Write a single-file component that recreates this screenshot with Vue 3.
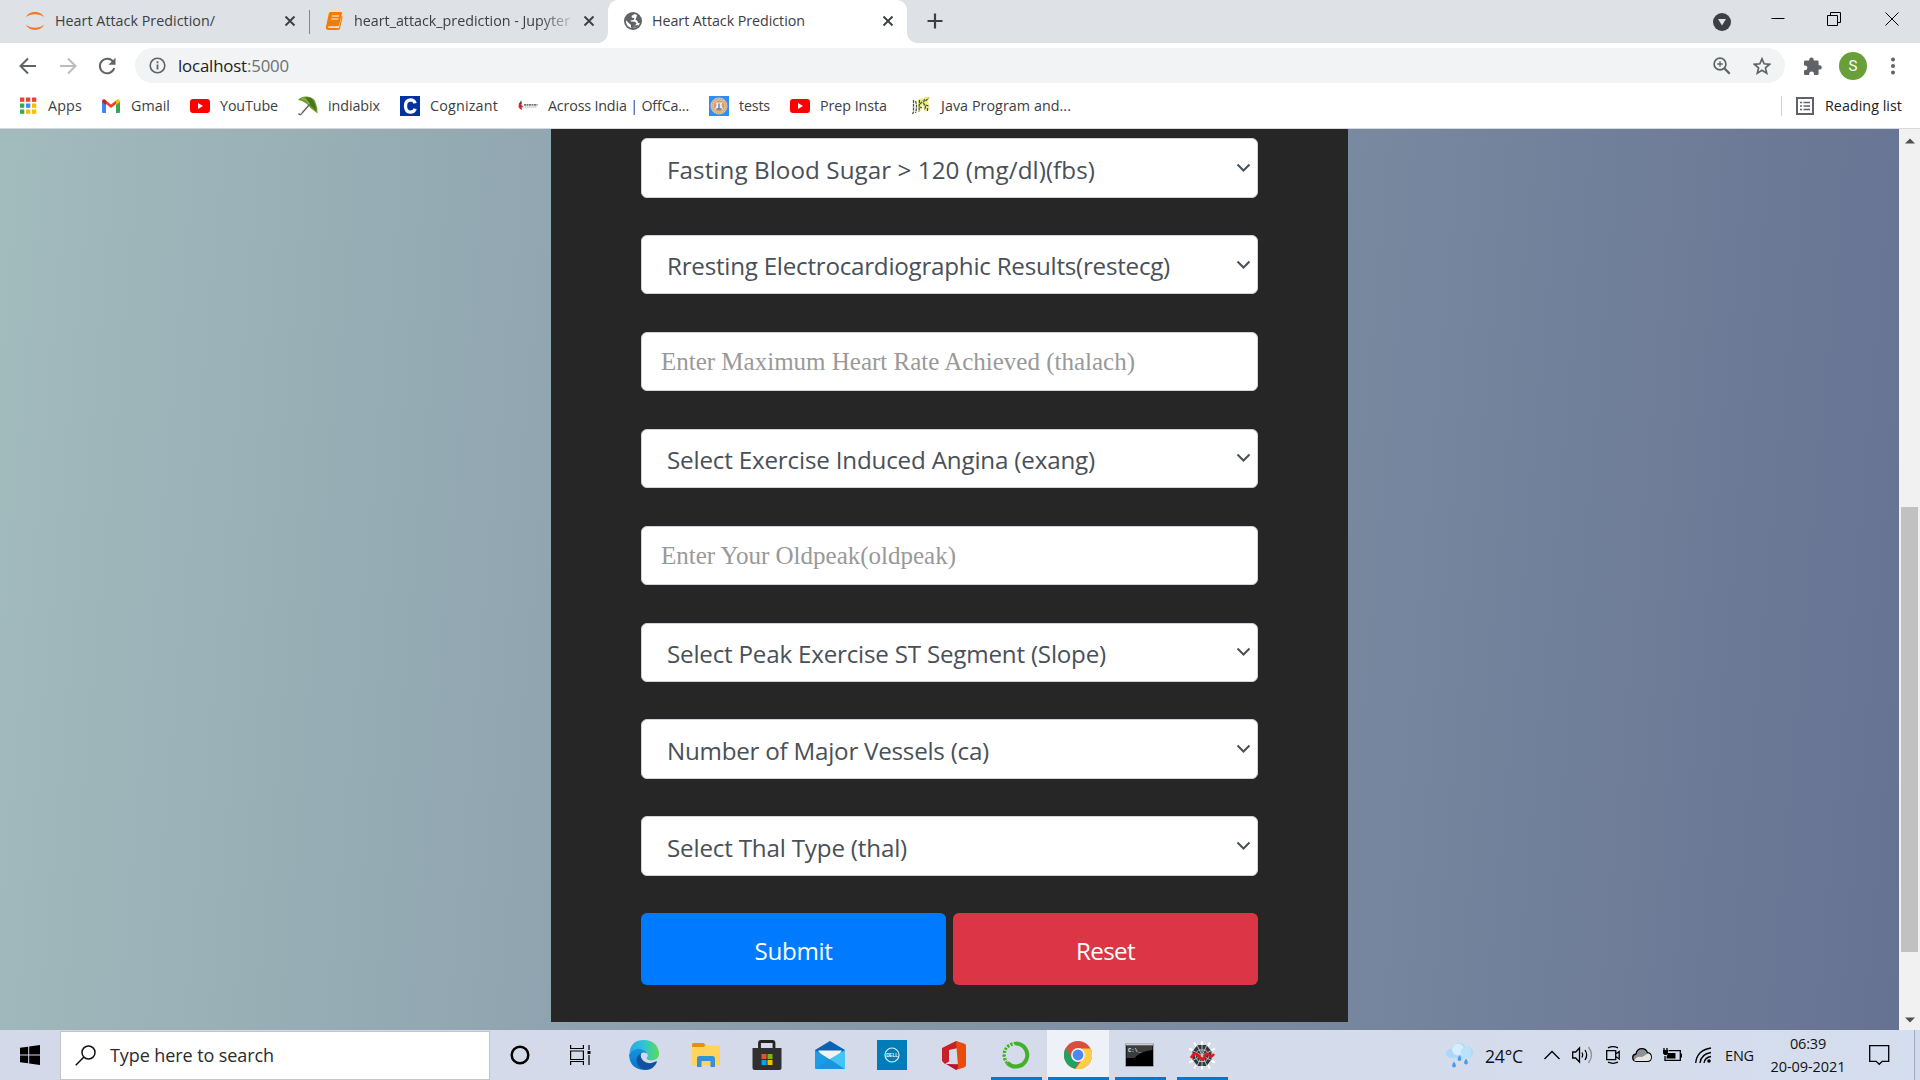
<script setup>
// Spreads letters so that a label takes exactly the given width.
const vFit = {
  mounted(el, { value }) {
    const natural = el.getBoundingClientRect().width
    el.style.letterSpacing = (value - natural) / el.textContent.length + 'px'
  }
}

const fields = [
  { label: 'Fasting Blood Sugar > 120 (mg/dl)(fbs)', width: 428, select: true },
  { label: 'Rresting Electrocardiographic Results(restecg)', width: 503, select: true },
  { label: 'Enter Maximum Heart Rate Achieved (thalach)', width: 474, select: false },
  { label: 'Select Exercise Induced Angina (exang)', width: 428, select: true },
  { label: 'Enter Your Oldpeak(oldpeak)', width: 295, select: false },
  { label: 'Select Peak Exercise ST Segment (Slope)', width: 439, select: true },
  { label: 'Number of Major Vessels (ca)', width: 322, select: true },
  { label: 'Select Thal Type (thal)', width: 240, select: true }
]

const bookmarks = [
  { icon: 'apps', label: 'Apps', width: 34 },
  { icon: 'gmail', label: 'Gmail', width: 39 },
  { icon: 'youtube', label: 'YouTube', width: 58 },
  { icon: 'umbrella', label: 'indiabix', width: 52 },
  { icon: 'cognizant', label: 'Cognizant', width: 68 },
  { icon: 'offcampus', label: 'Across India | OffCa...', width: 141 },
  { icon: 'tests', label: 'tests', width: 31 },
  { icon: 'youtube', label: 'Prep Insta', width: 67 },
  { icon: 'java', label: 'Java Program and...', width: 130 }
]

const appColors = ['#ea4335', '#ea4335', '#ea4335', '#34a853', '#4285f4', '#fbbc04', '#34a853', '#fbbc04', '#fbbc04']
</script>

<template>
  <div class="screen">
    <header class="tabs">
      <div class="tab first">
        <svg class="fav" width="20" height="20" viewBox="0 0 20 20"><path d="M1 6.200C3.800 -.6 16.200 -.6 19 6.200 14.500 2.400 5.500 2.400 1 6.200zM1 13.800C3.800 20.600 16.200 20.600 19 13.800 14.500 17.600 5.500 17.600 1 13.800z" fill="#f37726" /></svg>
        <span v-fit="160" class="title">Heart Attack Prediction/</span>
        <svg class="x" width="12" height="12" viewBox="0 0 12 12"><path d="M1.500 1.500l9 9M10.500 1.500l-9 9" /></svg>
      </div>
      <div class="tab second">
        <svg class="fav" width="18" height="20" viewBox="0 0 18 20"><path d="M5.500 1h10.500q1.300 0 1 1.300L14.200 14q-.4 1.300-1.700 1.300H3.500q-1.200 1 .3 1.600H14l2.700-12 1 .5L15 17.500Q14.500 19 13 19H3Q.2 18.500 1 15.500L3.800 2.500Q4.200 1 5.500 1z" fill="#f57c00" /><path d="M7 5h7M6.300 8h7" stroke="#fbd5ac" stroke-width="1.300" /></svg>
        <span class="clip"><span v-fit="216" class="title">heart_attack_prediction - Jupyter</span></span>
        <svg class="x" width="12" height="12" viewBox="0 0 12 12"><path d="M1.500 1.500l9 9M10.500 1.500l-9 9" /></svg>
      </div>
      <div class="tab active">
        <svg class="fav" width="18" height="18" viewBox="0 0 18 18"><circle cx="9" cy="9" r="9" fill="#5f6368" /><path d="M10.500 2L7.500 4 8 5.800 10.500 6 9.500 8 6.500 8.500 7 9.500 11 9.800 12.500 11.500 10.500 14 9.500 16 7 15.800 7 13 5 11.300 2 8.200V10.500Q3 14.500 7 16 12.500 16.500 15 13L15.800 11 14 11 13.500 9 11.500 7.500 12.500 5 13 3z" fill="#fff" /><path d="M9.700 15.800L11 13.500 14.800 12.800Q13 15.800 9.700 15.800z" fill="#5f6368" /></svg>
        <span v-fit="153" class="title">Heart Attack Prediction</span>
        <svg class="x" width="12" height="12" viewBox="0 0 12 12"><path d="M1.500 1.500l9 9M10.500 1.500l-9 9" /></svg>
      </div>
      <svg class="plus" width="16" height="16" viewBox="0 0 16 16"><path d="M8 .5v15M.5 8h15" stroke="#3c4043" stroke-width="2.200" /></svg>
      <div class="window">
        <svg width="18" height="18" viewBox="0 0 18 18"><circle cx="9" cy="9" r="9" fill="#3c4043" /><path d="M5 6h8l-4 6.500z" fill="#dee1e6" /></svg>
        <svg class="ctl" width="14" height="14" viewBox="0 0 14 14"><path d="M.5 6.500h13" /></svg>
        <svg class="ctl" width="14" height="14" viewBox="0 0 14 14"><path d="M.5 3.500h10v10h-10zM3.500 3.500v-3h10v10h-3" /></svg>
        <svg class="ctl" width="14" height="14" viewBox="0 0 14 14"><path d="M.5.5l13 13M13.500.5l-13 13" /></svg>
      </div>
    </header>

    <div class="toolbar">
      <svg width="18" height="18" viewBox="0 0 18 18" class="nav"><path d="M17 9H2M9 1.500L1.500 9 9 16.500" /></svg>
      <svg width="18" height="18" viewBox="0 0 18 18" class="nav dim"><path d="M1 9h15M9 1.500L16.500 9 9 16.500" /></svg>
      <svg width="18" height="18" viewBox="0 0 18 18" class="nav"><path d="M15.300 5A7.300 7.300 0 1 0 16.200 11" /><path d="M17.500.8v7h-7z" fill="#5f6368" stroke="none" /></svg>
      <div class="omnibox">
        <svg width="17" height="17" viewBox="0 0 17 17"><circle cx="8.500" cy="8.500" r="7.300" fill="none" stroke="#5f6368" stroke-width="1.600" /><path d="M8.500 7.500v5M8.500 4.300v1.900" stroke="#5f6368" stroke-width="1.800" /></svg>
        <span v-fit="111" class="url">localhost<i>:5000</i></span>
        <svg class="zoomer" width="18" height="18" viewBox="0 0 18 18"><g fill="none" stroke="#5f6368" stroke-width="1.700"><circle cx="7" cy="7" r="5.900" /><path d="M11.300 11.300l5.400 5.400" stroke-width="2.300" /><path d="M7 4.200v5.600M4.200 7h5.600" stroke-width="1.300" /></g></svg>
        <svg width="18" height="18" viewBox="0 0 18 18"><path d="M9 1.800l2.150 5 5.400.5-4.100 3.550 1.250 5.300L9 13.300l-4.700 2.850 1.250-5.300L1.450 7.300l5.400-.5z" fill="none" stroke="#5f6368" stroke-width="1.700" /></svg>
      </div>
      <svg class="puzzle" width="18" height="18" viewBox="0 0 18 18"><path d="M0 4.800Q0 3.500 1.300 3.500H5.300V2.600a2.200 2.200 0 0 1 4.400 0v.9h3.600q1.300 0 1.300 1.300V8.200h1a2.200 2.200 0 0 1 0 4.400h-1v4.100Q14.600 18 13.300 18H10v-1a2.400 2.400 0 0 0-4.800 0v1H1.300Q0 18 0 16.700v-3.500h1a2.400 2.400 0 0 0 0-4.800H0z" fill="#5f6368" /></svg>
      <span class="avatar">S</span>
      <svg class="dots" width="4" height="18" viewBox="0 0 4 18" fill="#5f6368"><circle cx="2" cy="2.500" r="2" /><circle cx="2" cy="9" r="2" /><circle cx="2" cy="15.500" r="2" /></svg>
    </div>

    <nav class="bookmarks">
      <div v-for="b in bookmarks" :key="b.label" class="bm">
        <svg width="20" height="20" viewBox="0 0 20 20">
          <template v-if="b.icon === 'apps'"><rect v-for="(c, i) in appColors" :key="i" :x="(i % 3) * 6" :y="1.500 + Math.floor(i / 3) * 6" width="4.300" height="4.300" :fill="c" /></template>
          <template v-else-if="b.icon === 'gmail'"><path d="M0 5v11q0 1 1 1h3V8z" fill="#4285f4" /><path d="M18 5v11q0 1-1 1h-3V8z" fill="#34a853" /><path d="M4 8V4.500l5 4 5-4V8l-5 4z" fill="#ea4335" /><path d="M0 5.500Q.3 2.500 3 3.500l1 1V9L0 6z" fill="#c5221f" /><path d="M18 5.500Q17.700 2.500 15 3.500l-1 1V9l4-3z" fill="#fbbc04" /></template>
          <template v-else-if="b.icon === 'youtube'"><rect y="3" width="20" height="14" rx="3" fill="#f00" /><path d="M8 7v6l5-3z" fill="#fff" /></template>
          <template v-else-if="b.icon === 'umbrella'"><path d="M0 4Q3 0 9 0.500 17 1 18 8q2 4 1.500 9.500L13 12.500 9 8 4 5z" fill="#6f9d2c" /><path d="M7 1l6 1q4 3 5.500 13L13 10z" fill="#47761c" /><path d="M4 2.500Q9 3 11 8" fill="none" stroke="#a3c45b" /><path d="M11.500 8.500L4.500 16.500q-2 3.500-4 1" fill="none" stroke="#666" stroke-width="1.500" /></template>
          <template v-else-if="b.icon === 'cognizant'"><rect width="20" height="20" fill="#0033a1" /><path d="M15.200 7.300Q14 3.800 10.500 3.800 5.500 4.200 5.500 10t5 6.200q3.500 0 4.700-3.500" fill="none" stroke="#fff" stroke-width="3.300" /></template>
          <template v-else-if="b.icon === 'offcampus'"><path d="M1 7l2-1 .5 3L5.500 11l-2 .5L4 14l-2-1-1.500-2z" fill="#d5272b" /><path d="M3 5v3" stroke="#222" /><path d="M6 8.800h13.500" stroke="#777" stroke-width="1.800" stroke-dasharray="2 .5" /><path d="M7 11h12" stroke="#b9a0a0" stroke-width="1" stroke-dasharray="1.500 .5" /></template>
          <template v-else-if="b.icon === 'tests'"><rect width="20" height="20" fill="#2f8df5" /><circle cx="10" cy="10" r="8.500" fill="#edc08b" /><circle cx="10" cy="10" r="7" fill="none" stroke="#8e8eae" stroke-width="1" stroke-dasharray="1 1" /><circle cx="10" cy="10" r="5.500" fill="#d99a62" /><path d="M6.500 6.500h7L12.500 9l1.500 4.500H6L7.500 9z" fill="#e4edf3" /><path d="M10 7.500v5M7.500 13h5" stroke="#5d78a0" stroke-width="1.300" /></template>
          <template v-else><path d="M7 3l5-1 0 6-3 8-2-5zM13 1h6l-2 5 2 6-5 4-2-7z" fill="#eef08a" /><path d="M2.500 4v12l-1 2M4.500 5q2 5 0 12M8.500 4L8 16M9 8l3-3M9 11l2 1M13.500 3l-1 4 2 4-1 3M14.500 5l3-3M14.500 9l3 1M16.500 12v3" fill="none" stroke="#4c5630" stroke-width="1.300" stroke-dasharray="3 .8" /></template>
        </svg>
        <span v-fit="b.width">{{ b.label }}</span>
      </div>
      <div class="reading">
        <svg width="18" height="18" viewBox="0 0 18 18" fill="none" stroke="#5f6368"><rect x="1" y="1" width="16" height="16" stroke-width="2" /><path d="M4 5.500h2M4 9h2M4 12.500h2M7.500 5.500H14M7.500 9H14M7.500 12.500H14" stroke-width="1.500" /></svg>
        <span v-fit="77">Reading list</span>
      </div>
    </nav>

    <main class="viewport">
      <div class="page">
        <form class="card" @submit.prevent>
          <div v-for="f in fields" :key="f.label" class="field" :class="{ plain: !f.select }">
            <span v-fit="f.width">{{ f.label }}</span>
            <svg v-if="f.select" width="15" height="10" viewBox="0 0 15 10"><path d="M1.500 1.500l6 6 6-6" fill="none" stroke="#495057" stroke-width="2" /></svg>
          </div>
          <div class="actions">
            <button class="submit"><span v-fit="78">Submit</span></button>
            <button class="reset" type="reset"><span v-fit="59">Reset</span></button>
          </div>
        </form>
      </div>
      <aside class="scroll">
        <svg width="10" height="6" viewBox="0 0 10 6"><path d="M0 5.500L5 .5l5 5z" fill="#505050" /></svg>
        <div class="thumb"></div>
        <svg width="10" height="6" viewBox="0 0 10 6"><path d="M0 .5l5 5 5-5z" fill="#505050" /></svg>
      </aside>
    </main>

    <footer class="taskbar">
      <div class="start"><svg width="20" height="20" viewBox="0 0 20 20"><path d="M0 2.800L8.200 1.700v7.800H0zM9.200 1.500L20 0v9.500H9.200zM0 10.500h8.200v7.800L0 17.200zM9.200 10.500H20V20L9.200 18.500z" /></svg></div>
      <div class="search">
        <svg width="21" height="21" viewBox="0 0 21 21" fill="none" stroke="#111" stroke-width="1.500"><circle cx="13.500" cy="7.500" r="6.500" /><path d="M9 12L.7 20.300" /></svg>
        <span v-fit="164">Type here to search</span>
      </div>
      <div class="slot"><svg width="20" height="20" viewBox="0 0 20 20"><circle cx="10" cy="10" r="8.300" fill="none" stroke="#000" stroke-width="2.500" /></svg></div>
      <div class="slot tv"><svg width="21" height="20" viewBox="0 0 21 20" fill="none" stroke="#000" stroke-width="1.200"><path d="M.6 0v3.500h12.800V0M.6 6h12.800v8.500H.6zM.6 20v-3.500h12.800V20M19 0v5M19 10v10" /><path d="M17.500 6h3v3h-3z" fill="#000" stroke="none" /></svg></div>
      <div class="slot">
        <svg width="30" height="30" viewBox="0 0 30 30">
          <defs><linearGradient id="eg" x1="0" x2="1"><stop offset="0" stop-color="#25a9e8" /><stop offset=".5" stop-color="#30c3d4" /><stop offset="1" stop-color="#5cdc55" /></linearGradient><linearGradient id="eb" x1="0" y1="0" x2="0" y2="1"><stop offset="0" stop-color="#1694df" /><stop offset="1" stop-color="#0872cc" /></linearGradient></defs>
          <path d="M.3 13Q2 0 15 0q13 .5 15 12.500.5 7-7 8-5 0-5.500-2.500 2-1.500 1-4-2-4.500-8-5Q3.500 8.500.3 13z" fill="url(#eg)" />
          <path d="M0 15Q2 8.500 10 8.800q6.500.3 8.300 5-5-3-6.800 1-2 8.500 7 11.500-1 3.500-4 3.500Q1 29 0 15z" fill="url(#eb)" />
          <path d="M12 13q-7 5-3 12 3 5 8.500 5Q25 29 28 22q0-1-1.500-.5-7 3.500-12-.5-4-4-2.500-8z" fill="#10529f" />
        </svg>
      </div>
      <div class="slot"><svg width="28" height="24" viewBox="0 0 28 24"><path d="M0 1.500Q0 0 1.500 0h10l2 2v2.500H0z" fill="#dd9500" /><path d="M0 4h11l3-1.500h12.500Q28 2.500 28 4v17q0 1.500-1.500 1.500h-25Q0 22.500 0 21z" fill="#ffd35c" /><path d="M5 24v-8.500q0-2.500 2.500-2.500h13q2.500 0 2.500 2.500V24h-4.500v-6h-9v6z" fill="#3990d8" /></svg></div>
      <div class="slot left"><svg width="30" height="30" viewBox="0 0 30 30"><path d="M7.500 9V3q0-1.500 1.500-1.500h11.500q1.500 0 1.500 1.500v6" fill="none" stroke="#242424" stroke-width="2.800" /><path d="M.5 8h29v20q0 2-2 2h-25q-2 0-2-2z" fill="#303030" /><path d="M9.500 14h5v5h-5z" fill="#f25022" /><path d="M15.500 14h5v5h-5z" fill="#7fba00" /><path d="M9.500 20h5v5h-5z" fill="#00a4ef" /><path d="M15.500 20h5v5h-5z" fill="#ffb900" /></svg></div>
      <div class="slot"><svg width="30" height="28" viewBox="0 0 30 28"><path d="M0 9L15 0l15 9v4H0z" fill="#0b62b5" /><path d="M3 9.500h24l-7 10H10z" fill="#f3f3f3" /><path d="M0 9l30 19H1q-1 0-1-1z" fill="#1c9ce6" /><path d="M30 9v18q0 1-1 1L14.500 18.200z" fill="#42c4f5" /><path d="M0 28h29.500L14.500 18z" fill="#1b94dd" /></svg></div>
      <div class="slot"><svg width="30" height="30" viewBox="0 0 30 30"><rect width="30" height="30" fill="#007db8" /><circle cx="15" cy="15" r="7" fill="none" stroke="#d8edf7" stroke-width="1.200" /><text x="15" y="16.800" text-anchor="middle" class="dell">DELL</text></svg></div>
      <div class="slot"><svg width="24" height="29" viewBox="0 0 24 29"><path d="M0 7L14 0l2 1v6L7 9v11.500L3 23 0 20z" fill="#c72127" /><path d="M14 0l8 2.500q2 .7 2 2V24q0 1.800-2 2.500l-8 2.500 2-4z" fill="#ea4b08" /><path d="M4 23l12 .2V26q0 2-2 3z" fill="#b71432" /></svg></div>
      <div class="slot open"><svg width="28" height="28" viewBox="0 0 28 28" fill="none"><path d="M14 2.500A11.500 11.500 0 1 1 5.500 22" stroke="#43b02a" stroke-width="4" /><path d="M14 2.500A11.500 11.500 0 0 0 5.500 22" stroke="#43b02a" stroke-width="3.500" stroke-dasharray="2.200 1.300" /><path d="M13 4A10.500 10.500 0 0 0 7 22" stroke="#d8eed5" stroke-width="1" stroke-dasharray="2 2" /></svg></div>
      <div class="slot open current"><svg width="28" height="28" viewBox="0 0 28 28"><circle cx="14" cy="14" r="14" fill="#d94f3e" /><path d="M1.900 7L8 17.500 14 20.500 11 27.700A14 14 0 0 1 1.900 7z" fill="#1da362" /><path d="M14 7.500h12.400A14 14 0 0 1 11.500 27.800L20 16z" fill="#ffce44" /><circle cx="14" cy="14" r="6.900" fill="#f4f6fb" /><circle cx="14" cy="14" r="5.400" fill="#4b89f0" /></svg></div>
      <div class="slot open left"><svg width="29" height="24" viewBox="0 0 29 24"><rect x=".5" y=".5" width="28" height="23" rx="1" fill="#000" stroke="#9ba0a8" /><path d="M1.500 3h26v4q-12 1-18 8h-8z" fill="#3d3d3d" /><path d="M1 1.500h27" stroke="#c8ccd2" stroke-width="2" /><text x="3" y="9" class="cmd">C:\_</text></svg></div>
      <div class="slot open last"><svg width="28" height="29" viewBox="0 0 28 28"><path d="M14 0v28M1 7l26 14M27 7L1 21M6 1l16 26M22 1L6 27" stroke="#fff" stroke-width="2" /><path d="M9.500 3.500h9l5 6.500v8l-5 6.500h-9L4.500 18v-8z" fill="#35383b" /><path d="M14 3v22M4.500 9l19 10M23.500 9l-19 10M9 3.500l10 21M19 3.500L9 24.500M10.500 8.500h7l3 3.500v4l-3 4h-7l-3-4v-4z" fill="none" stroke="#c5c8cc" stroke-width=".9" /><path d="M3 16.500q3.500-6.500 7-2.500l3 3q2 1.500 3.500-1.500 2-5 4.500-2 1.500 3.500 5-1" fill="none" stroke="#e5151c" stroke-width="2.700" /></svg></div>
      <div class="tray">
        <svg class="weather" width="27" height="25" viewBox="0 0 27 25"><path d="M7 15q-7 0-7-5 .5-4 5-4Q7 0 13 0q5 0 6 4 7-.5 8 5 0 6-6 6z" fill="#a9d8f8" /><circle cx="12" cy="6.500" r="6" fill="#d5edfc" /><circle cx="20" cy="9.500" r="5.500" fill="#bce2fa" /><path d="M8 18.500q2.500 3.500 1.700 5-1.700 2-3.400 0-.8-1.500 1.700-5zM13.500 12q2.500 3.500 1.700 5-1.700 2-3.400 0-.8-1.500 1.700-5zM20 15.500q2.500 3.500 1.700 5-1.700 2-3.400 0-.8-1.500 1.700-5z" fill="#419ef2" /></svg>
        <span v-fit="38" class="temp">24°C</span>
        <svg class="up" width="16" height="10" viewBox="0 0 16 10"><path d="M.5 9L8 1.500 15.500 9" /></svg>
        <svg class="spk" width="21" height="18" viewBox="0 0 21 18"><path d="M.7 6h3L7.500 2v14L3.700 12h-3zM10 6.500q1.500 2.500 0 5M13 4q3.300 5 0 10" /><path d="M16.500 1q6 8 0 16" stroke="#8b909c" /></svg>
        <svg class="meet" width="15" height="18" viewBox="0 0 15 18"><path d="M.7 4.700h9v9h-9zM9.700 8l3.500-2.500v7.500L9.700 10.500M2 1.800q5-2.200 10 0M2 16.200q5 2.200 10 0" /></svg>
        <svg class="cloud" width="20" height="14" viewBox="0 0 20 14"><path d="M4.500 13.300Q.7 13 .7 9.500.8 6.500 4 6 5 .7 10 .7q4 0 5.500 4 3.800.3 3.800 4.500 0 4-4 4.100z" fill="#8f9193" /><path d="M2 12.500Q5 7.500 10 9l6-3.500q3 .5 3 4 0 3-3.500 3.500H4z" fill="#e6e6e6" class="bare" /></svg>
        <svg class="bat" width="20" height="14" viewBox="0 0 20 14"><path d="M6.500 2.700h11.800v9.600H3V8M19.300 5.500v4" /><path d="M6 5h7.500v5.500H4.500V9zM1 2h5v3.500L4.500 7h-2L1 5.500z" fill="#000" stroke="none" /><path d="M2 0v3M5 0v3" /></svg>
        <svg class="wifi" width="17" height="17" viewBox="0 0 17 17"><path d="M.7 16Q2 3 16 1M5 16Q6 7 16 5.500M9 16q.7-5.500 7-6.500" /><circle cx="14" cy="14" r="1.800" fill="#000" stroke="none" /></svg>
        <span v-fit="29" class="lang">ENG</span>
        <div class="clock"><span v-fit="36">06:39</span><span v-fit="75">20-09-2021</span></div>
        <svg class="note" width="21" height="21" viewBox="0 0 21 21"><path d="M.7.700h19v15.600h-6.500L10.200 19.300 7.200 16.300H.7z" /></svg>
        <div class="edge"></div>
      </div>
    </footer>
  </div>
</template>

<style>
body { margin: 0; overflow: hidden; }
</style>

<style scoped>
.screen { width: 1920px; height: 1080px; display: flex; flex-direction: column; font-family: "Open Sans", "Noto Sans", sans-serif; overflow: hidden; background: #fff; }
.screen * { box-sizing: border-box; }
span { white-space: nowrap; }
svg { flex: none; display: block; }

.tabs { height: 43px; background: #dee1e6; display: flex; align-items: stretch; flex: none; }
.tab { display: flex; align-items: center; font-size: 14.300px; color: #3c4043; flex: none; }
.title { line-height: 20px; }
.x { margin-left: auto; fill: none; stroke: #3c4043; stroke-width: 1.900; }
.first { width: 310px; padding: 0 14px 1px 25px; position: relative; }
.first::after { content: ""; position: absolute; right: 0; top: 10px; width: 1px; height: 24px; background: #80868b; }
.first .title { margin-left: 10px; }
.second { width: 298px; padding: 0 13px 1px 15px; }
.clip { margin-left: 11px; width: 218px; overflow: hidden; -webkit-mask-image: linear-gradient(90deg, #000 85%, transparent 103%); mask-image: linear-gradient(90deg, #000 85%, transparent 103%); }
.active { position: relative; width: 299px; padding: 0 13px 1px 16px; background: #fff; border-radius: 10px 10px 0 0; }
.active .title { margin-left: 10px; }
.active::before, .active::after { content: ""; position: absolute; bottom: 0; width: 10px; height: 10px; }
.active::before { left: -10px; background: radial-gradient(circle at 0 0, transparent 9.500px, #fff 10px); }
.active::after { right: -10px; background: radial-gradient(circle at 100% 0, transparent 9.500px, #fff 10px); }
.plus { margin: 13px 0 0 20px; }
.window { margin-left: auto; display: flex; align-items: flex-start; padding: 12px 21.500px 0 0; }
.window > svg:first-child { margin: 1px 40px 0 0; }
.ctl { fill: none; stroke: #000; }
.ctl + .ctl { margin-left: 43px; }
.ctl:nth-child(3) { margin-left: 42px; }
.ctl:last-child { margin-left: 44px; }

.toolbar { height: 45px; flex: none; display: flex; align-items: center; padding: 0 25px 0 19px; }
.nav { margin-right: 22px; fill: none; stroke: #5f6368; stroke-width: 2; }
.nav.dim { stroke: #babcbe; margin-right: 21px; }
.nav:nth-child(3) { margin-right: 19px; }
.omnibox { width: 1650px; height: 35px; border-radius: 18px; background: #f1f3f4; display: flex; align-items: center; padding: 0 14px; }
.url { margin-left: 12px; font-size: 16.800px; color: #202124; }
.url i { font-style: normal; color: #6b7075; }
.zoomer { margin-left: auto; margin-right: 22px; }
.puzzle { margin-left: 19px; }
.avatar { margin-left: 17px; width: 28px; height: 28px; border-radius: 50%; background: #689f38; color: #fff; font: 15px/28px Roboto, sans-serif; text-align: center; }
.dots { margin-left: auto; }

.bookmarks { height: 41px; flex: none; display: flex; align-items: center; padding: 0 18px 4px 20px; border-bottom: 1px solid #d5d8dc; font-size: 14.300px; color: #3c4043; }
.bm { display: flex; align-items: center; margin-right: 20px; }
.bm:first-child svg { margin-right: -2px; }
.bm:nth-child(2) svg { margin-right: -1px; }
.bm:nth-child(9) { margin-left: 4px; }
.bm span { margin-left: 10px; padding-bottom: 1.500px; }
.reading { margin-left: auto; border-left: 1px solid #cfd1d5; height: 20px; display: flex; align-items: center; padding-left: 14px; color: #202124; }
.reading span { margin-left: 11px; padding-bottom: 1.500px; }

.viewport { height: 901px; display: flex; flex: none; }
.page { width: 1899px; display: flex; align-items: flex-start; padding-left: 551px; background: linear-gradient(95deg, #a2bbbd 0%, #667292 100%); }
.card { width: 797px; height: 893px; background: #262626; padding: 9px 90px 0; }
.field { height: 59.500px; margin-bottom: 37.420px; border: 1px solid #ced4da; border-radius: 6px; background: #fff; display: flex; align-items: center; justify-content: space-between; padding: 2.500px 6px 0 25px; color: #495057; font-size: 24.200px; }
.field svg { margin-top: -2.500px; }
.plain { padding: 1px 0 0 19px; color: #999; font: 25px "Liberation Serif", serif; }
.actions { display: flex; gap: 7px; }
.actions button { width: 305px; height: 72px; border: 0; border-radius: 6px; color: #fff; font: 24.200px "Open Sans", sans-serif; padding: 2px 0 0; }
.submit { background: #007bff; }
.reset { background: #dc3545; }
.scroll { width: 21px; background: #f1f1f1; display: flex; flex-direction: column; align-items: center; padding: 9px 0 7px; }
.thumb { width: 17px; height: 445px; background: #c1c1c1; margin: 363px 0 auto; flex: none; }

.taskbar { height: 50px; flex: none; display: flex; background: linear-gradient(90deg, #d4d9e9, #d4dbea 60%, #d5deee); }
.start { width: 60px; display: flex; align-items: center; padding-left: 20px; }
.search { width: 430px; margin-right: -1px; height: 49px; margin-top: .5px; border: 1px solid #c5c5c8; background: #fff; display: flex; align-items: center; padding-left: 14px; font-size: 18px; color: #2b2b2b; }
.search span { margin-left: 14px; }
.slot { width: 62px; display: flex; align-items: center; justify-content: center; position: relative; }
.left { padding-right: 2px; }
.tv { padding-right: 4px; }
.open::after { content: ""; position: absolute; bottom: 0; left: 6px; width: 51px; height: 3px; background: #0078d7; }
.last { padding-right: 1px; }
.current { background: #eef1f8; }
.current::after { left: 1px; width: 61px; }
.dell { font: bold 4.500px "Liberation Sans", sans-serif; fill: #fff; }
.cmd { font: bold 5.500px "Liberation Mono", monospace; fill: #e5e5e5; }
.tray { flex: 1; display: flex; align-items: center; padding-left: 213px; color: #111; }
.tray > svg:not(.weather) { fill: none; stroke: #000; stroke-width: 1.300; }
.tray .bare { stroke: none; }
.tray > * { flex: none; }
.temp { margin-left: 12px; font-size: 17.600px; padding-top: 2px; }
.up { margin-left: 21px; }
.spk { margin-left: 12px; }
.meet { margin-left: 13px; }
.cloud { margin-left: 11px; }
.bat { margin-left: 10px; }
.wifi { margin-left: 13px; }
.lang { margin-left: 13px; font-size: 14.500px; }
.clock { margin-left: 16px; width: 76px; display: flex; flex-direction: column; align-items: center; font-size: 14.500px; line-height: 23.500px; }
.note { margin-left: 23px; }
.edge { margin-left: auto; width: 6px; height: 50px; border-left: 1px solid #a6adba; background: #d0dbef; }
</style>
